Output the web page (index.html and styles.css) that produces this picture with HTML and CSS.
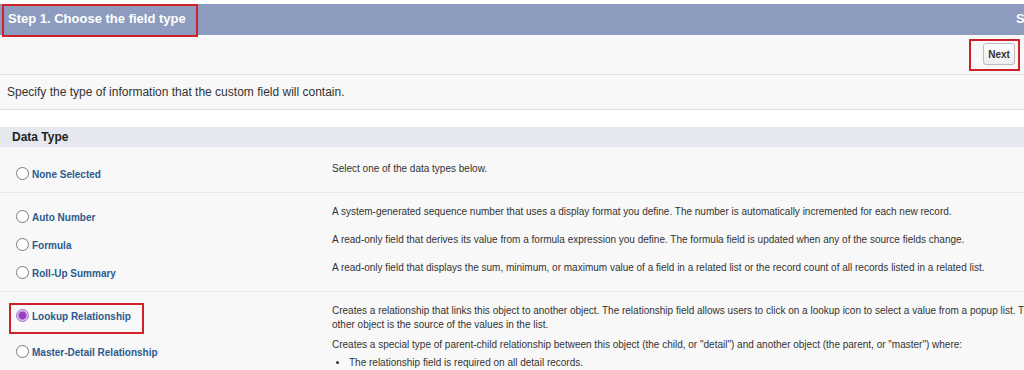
FILE: index.html
```
<html>

<head>
  <link rel="stylesheet" href="styles.css">
</head>

<body>
  <div class="page">
    <div class="step-header">
      <div class="step-left">
        <span class="step-title mark">Step 1. Choose the field type</span>
      </div>
      <span class="step-count">Step 1 of 4</span>
    </div>

    <div class="button-row">
      <div class="mark next-wrap">
        <button class="btn">Next</button>
      </div>
    </div>

    <div class="intro">Specify the type of information that the custom field will contain.</div>

    <div class="section-head">Data Type</div>

    <div class="group group-first">
      <div class="row">
        <div class="label-cell"><span class="radio"></span><span class="type-label">None Selected</span></div>
        <div class="desc-cell">Select one of the data types below.</div>
      </div>
    </div>

    <div class="group">
      <div class="row">
        <div class="label-cell"><span class="radio"></span><span class="type-label">Auto Number</span></div>
        <div class="desc-cell">A system-generated sequence number that uses a display format you define. The number is automatically incremented for each new record.</div>
      </div>
      <div class="row">
        <div class="label-cell"><span class="radio"></span><span class="type-label">Formula</span></div>
        <div class="desc-cell">A read-only field that derives its value from a formula expression you define. The formula field is updated when any of the source fields change.</div>
      </div>
      <div class="row">
        <div class="label-cell"><span class="radio"></span><span class="type-label">Roll-Up Summary</span></div>
        <div class="desc-cell">A read-only field that displays the sum, minimum, or maximum value of a field in a related list or the record count of all records listed in a related list.</div>
      </div>
    </div>

    <div class="group group-last">
      <div class="row row-lookup">
        <div class="label-cell">
          <span class="mark lookup-mark"><span class="radio radio-on"></span><span class="type-label">Lookup Relationship</span></span>
        </div>
        <div class="desc-cell">
          <div>Creates a relationship that links this object to another object. The relationship field allows users to click on a lookup icon to select a value from a popup list. The</div>
          <div>other object is the source of the values in the list.</div>
        </div>
      </div>
      <div class="row row-master">
        <div class="label-cell"><span class="radio"></span><span class="type-label">Master-Detail Relationship</span></div>
        <div class="desc-cell">
          <div>Creates a special type of parent-child relationship between this object (the child, or "detail") and another object (the parent, or "master") where:</div>
          <ul class="rules">
            <li>The relationship field is required on all detail records.</li>
          </ul>
        </div>
      </div>
    </div>
  </div>
</body>

</html>
```

FILE: styles.css
```
body {
  margin: 0;
  background-color: #f8f8f8;
  font-family: "Liberation Sans", Arial, sans-serif;
  color: #333;
  overflow: hidden;
}

.page {
  width: 1024px;
  padding-top: 4px;
  background-color: #fff;
}

.mark {
  border: 2px solid #d0202a;
}

/* step header */
.step-header {
  display: flex;
  height: 31px;
  background-color: #8d9cbe;
  white-space: nowrap;
}

.step-left {
  flex: 0 0 1016px;
  padding-left: 2px;
  box-sizing: border-box;
}

.step-title {
  display: inline-block;
  height: 33px;
  line-height: 26px;
  padding: 0 10px 0 4px;
  box-sizing: border-box;
  font-size: 13px;
  font-weight: bold;
  color: #fff;
}

.step-count {
  line-height: 30px;
  font-size: 13px;
  font-weight: bold;
  color: #fff;
}

/* button row */
.button-row {
  display: flex;
  justify-content: flex-end;
  height: 39px;
  background-color: #f8f8f8;
  border-bottom: 1px solid #e1e1e1;
}

.next-wrap {
  margin: 4px 4px 0 0;
  padding: 2px 3px 4px 12px;
  height: 22px;
}

.btn {
  height: 22px;
  width: 32px;
  padding: 0;
  font-family: "Liberation Sans", Arial, sans-serif;
  font-size: 10px;
  font-weight: bold;
  color: #333;
  background: linear-gradient(#ffffff, #ececec);
  border: 1px solid #bdbdbd;
  border-radius: 3px;
}

.intro {
  height: 34px;
  line-height: 34px;
  padding-left: 7px;
  font-size: 12px;
  background-color: #f8f8f8;
  border-bottom: 1px solid #e1e1e1;
  margin-bottom: 17px;
}

.section-head {
  height: 20px;
  line-height: 20px;
  padding-left: 12px;
  font-size: 12px;
  font-weight: bold;
  color: #222;
  background-color: #e5e8ef;
}

/* data type rows */
.group {
  padding: 12px 0 2px 0;
  background-color: #f8f8f8;
  border-bottom: 1px solid #e8e8e8;
}

.group-first {
  padding-top: 15px;
}

.group-last {
  padding-top: 12px;
  border-bottom: none;
}

.row {
  display: flex;
  padding-bottom: 9px;
  white-space: nowrap;
}

.label-cell {
  flex: 0 0 332px;
  box-sizing: border-box;
  padding: 5px 0 0 16px;
  height: 19px;
}

.desc-cell {
  font-size: 10px;
  line-height: 14px;
  color: #333;
}

.radio {
  display: inline-block;
  width: 11px;
  height: 11px;
  border: 1px solid #7a7a7a;
  border-radius: 50%;
  background-color: #fff;
  vertical-align: -2px;
  margin-right: 3px;
}

.radio-on {
  border-color: #a070c8;
  background: radial-gradient(circle, #9a3fc6 0, #9a3fc6 3.5px, #d8b8ec 4.5px, #e9d8f4 6px);
}

.type-label {
  font-size: 10px;
  line-height: 14px;
  font-weight: bold;
  color: #2d5a8e;
}

.row-lookup {
  padding-bottom: 6px;
}

.row-lookup .label-cell {
  padding: 0 0 0 9px;
}

.lookup-mark {
  display: inline-block;
  margin-top: -1px;
  padding: 4px 11px 8px 5px;
}

.row-master .label-cell {
  padding-top: 7px;
}

.rules {
  margin: 4px 0 0 0;
  padding-left: 17px;
}
```
